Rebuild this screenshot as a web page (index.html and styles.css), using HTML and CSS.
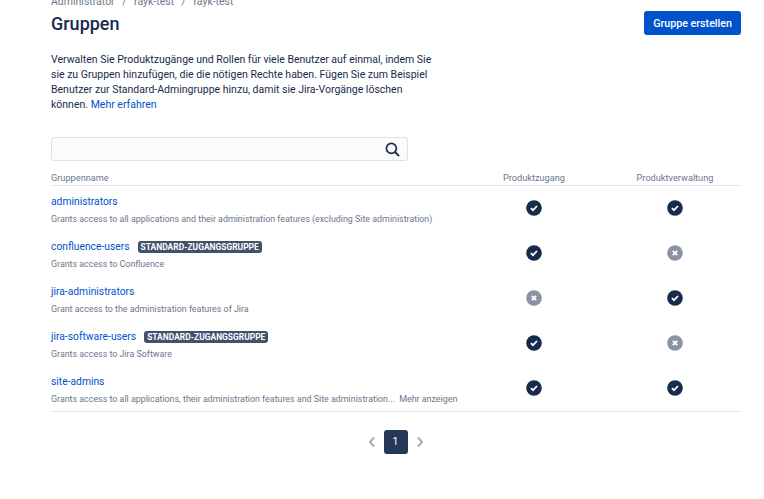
FILE: index.html
```html
<!doctype html>
<html lang="de">
<head>
    <meta charset="UTF-8">
    <title>Gruppen</title>
    <link rel="stylesheet" href="styles.css">
</head>
<body>
<svg class="defs" width="0" height="0">
    <symbol id="yes" viewBox="0 0 16 16">
        <circle cx="8" cy="8" r="7.800" fill="#172b4d"/>
        <path d="M4.900 8.200l2.100 2 4-4.200" fill="none" stroke="#fff" stroke-width="1.800"/>
    </symbol>
    <symbol id="no" viewBox="0 0 16 16">
        <circle cx="8" cy="8" r="7.800" fill="#8993a4"/>
        <path d="M5.800 5.800l4.400 4.400M10.200 5.800l-4.400 4.400" fill="none" stroke="#fff" stroke-width="1.900"/>
    </symbol>
</svg>
<div class="page">
    <div class="crumbs">
        <span>Administrator</span><span class="sep">/</span><span>rayk-test</span><span class="sep">/</span><span>rayk-test</span>
    </div>
    <div class="head">
        <h1>Gruppen</h1>
        <button class="create">Gruppe erstellen</button>
    </div>
    <p class="intro">Verwalten Sie Produktzugänge und Rollen für viele Benutzer auf einmal, indem Sie sie zu Gruppen hinzufügen, die die nötigen Rechte haben. Fügen Sie zum Beispiel Benutzer zur Standard-Admingruppe hinzu, damit sie Jira-Vorgänge löschen können. <a href="#">Mehr erfahren</a></p>
    <div class="search">
        <input type="text">
        <svg width="15" height="15" viewBox="0 0 16 16"><circle cx="6.800" cy="6.800" r="5.300" fill="none" stroke="#172b4d" stroke-width="1.800"/><path d="M10.700 10.700l4.300 4.300" stroke="#172b4d" stroke-width="2"/></svg>
    </div>
    <div class="table">
        <div class="row top">
            <div>Gruppenname</div>
            <div class="mid">Produktzugang</div>
            <div class="mid">Produktverwaltung</div>
        </div>
        <div class="row">
            <div>
                <div class="name"><a href="#">administrators</a></div>
                <div class="desc">Grants access to all applications and their administration features (excluding Site administration)</div>
            </div>
            <div class="mid"><svg class="mark"><use href="#yes"/></svg></div>
            <div class="mid"><svg class="mark"><use href="#yes"/></svg></div>
        </div>
        <div class="row">
            <div>
                <div class="name"><a href="#">confluence-users</a><span class="tag">Standard-Zugangsgruppe</span></div>
                <div class="desc">Grants access to Confluence</div>
            </div>
            <div class="mid"><svg class="mark"><use href="#yes"/></svg></div>
            <div class="mid"><svg class="mark"><use href="#no"/></svg></div>
        </div>
        <div class="row">
            <div>
                <div class="name"><a href="#">jira-administrators</a></div>
                <div class="desc">Grant access to the administration features of Jira</div>
            </div>
            <div class="mid"><svg class="mark"><use href="#no"/></svg></div>
            <div class="mid"><svg class="mark"><use href="#yes"/></svg></div>
        </div>
        <div class="row">
            <div>
                <div class="name"><a href="#">jira-software-users</a><span class="tag">Standard-Zugangsgruppe</span></div>
                <div class="desc">Grants access to Jira Software</div>
            </div>
            <div class="mid"><svg class="mark"><use href="#yes"/></svg></div>
            <div class="mid"><svg class="mark"><use href="#no"/></svg></div>
        </div>
        <div class="row last">
            <div>
                <div class="name"><a href="#">site-admins</a></div>
                <div class="desc">Grants access to all applications, their administration features and Site administration... <span class="more">Mehr anzeigen</span></div>
            </div>
            <div class="mid"><svg class="mark"><use href="#yes"/></svg></div>
            <div class="mid"><svg class="mark"><use href="#yes"/></svg></div>
        </div>
    </div>
    <div class="pager">
        <svg width="8" height="12" viewBox="0 0 8 12"><path d="M6 1.500L2 6l4 4.500" fill="none" stroke="#a5adba" stroke-width="2"/></svg>
        <span class="current">1</span>
        <svg width="8" height="12" viewBox="0 0 8 12"><path d="M2 1.500L6 6l-4 4.500" fill="none" stroke="#a5adba" stroke-width="2"/></svg>
    </div>
</div>
</body>
</html>
```

FILE: styles.css
```css
* {
    box-sizing: border-box;
}

html, body {
    height: 100%;
    overflow: hidden;
}

body {
    margin: 0;
    background: #fff;
    color: #172b4d;
    font-family: Roboto, sans-serif;
    font-size: 10.5px;
}

.defs {
    position: absolute;
}

a {
    color: #0052cc;
    text-decoration: none;
}

.page {
    margin-top: -6px;
    padding: 0 23px 0 51px;
}

.crumbs {
    height: 16px;
    line-height: 16px;
    color: #6b778c;
    font-size: 10.5px;
}

.sep {
    padding: 0 7.5px;
}

.head {
    display: flex;
    justify-content: space-between;
    align-items: flex-start;
}

h1 {
    margin: 2px 0 0;
    font-size: 18px;
    font-weight: 500;
    line-height: 24px;
}

.create {
    height: 24px;
    margin-top: 1px;
    padding: 0 9px;
    border: 0;
    border-radius: 3px;
    background: #0052cc;
    color: #fff;
    font-family: inherit;
    font-size: 10.7px;
    font-weight: 500;
}

.intro {
    width: 385px;
    margin: 16px 0 0;
    line-height: 15px;
}

.search {
    display: flex;
    align-items: center;
    width: 357px;
    height: 24px;
    margin-top: 25px;
    padding-right: 7px;
    border: 1px solid #dfe1e6;
    border-radius: 3px;
    background: #fafbfc;
}

.search input {
    flex: 1;
    min-width: 0;
    border: 0;
    outline: 0;
    background: none;
}

.table {
    margin-top: 9px;
}

.row {
    display: grid;
    grid-template-columns: 408px 150px 132px;
    align-items: center;
    height: 45px;
}

.row.top {
    height: 16px;
    border-bottom: 1px solid #dfe1e6;
    color: #6b778c;
    font-size: 9.2px;
    line-height: 14px;
}

.row.last {
    height: 46px;
    border-bottom: 1px solid #dfe1e6;
}

.mid {
    display: flex;
    justify-content: center;
}

.mark {
    width: 16px;
    height: 16px;
    margin-bottom: 1px;
}

.name {
    display: flex;
    align-items: center;
    height: 16px;
    margin-top: 2px;
    font-size: 10.3px;
}

.tag {
    margin-left: 8px;
    padding: 0 3px;
    border-radius: 3px;
    background: #42526e;
    color: #fff;
    font-size: 8.45px;
    font-weight: 700;
    line-height: 12px;
    text-transform: uppercase;
}

.desc {
    margin-top: 2px;
    color: #6b778c;
    font-size: 8.88px;
    line-height: 14px;
    white-space: nowrap;
}

.more {
    margin-left: 2px;
}

.pager {
    display: flex;
    justify-content: center;
    align-items: center;
    gap: 8px;
    margin-top: 18px;
    margin-left: -1px;
}

.current {
    width: 24px;
    height: 24px;
    border-radius: 3px;
    background: #253858;
    color: #fff;
    line-height: 24px;
    text-align: center;
}
```
